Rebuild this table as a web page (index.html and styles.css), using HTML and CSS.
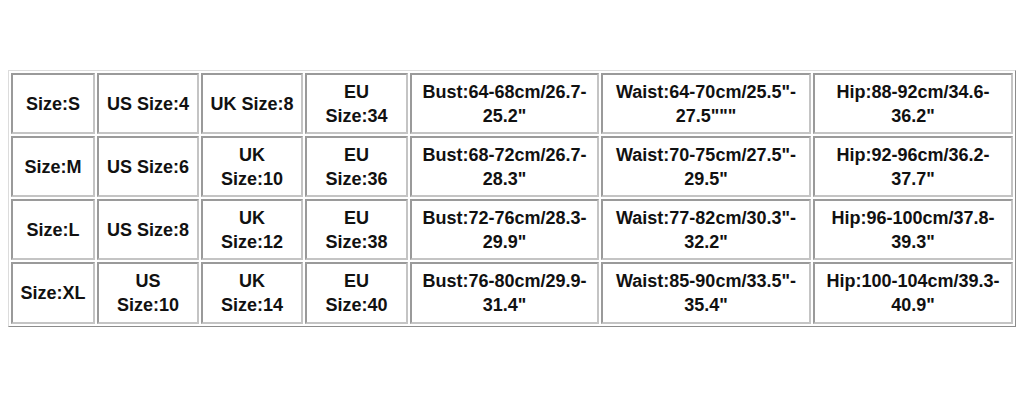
FILE: index.html
```html
<!DOCTYPE html>
<html>
<head>
<meta charset="utf-8">
<link rel="stylesheet" href="styles.css">
</head>
<body>
<table class="sizes">
  <tr>
    <td class="c1">Size:S</td>
    <td class="c2">US Size:4</td>
    <td class="c3">UK Size:8</td>
    <td class="c4">EU Size:34</td>
    <td class="c5">Bust:64-68cm/26.7-<br>25.2"</td>
    <td class="c6">Waist:64-70cm/25.5"-<br>27.5"""</td>
    <td class="c7">Hip:88-92cm/34.6-<br>36.2"</td>
  </tr>
  <tr>
    <td>Size:M</td>
    <td>US Size:6</td>
    <td>UK Size:10</td>
    <td>EU Size:36</td>
    <td>Bust:68-72cm/26.7-<br>28.3"</td>
    <td>Waist:70-75cm/27.5"-<br>29.5"</td>
    <td>Hip:92-96cm/36.2-<br>37.7"</td>
  </tr>
  <tr>
    <td>Size:L</td>
    <td>US Size:8</td>
    <td>UK Size:12</td>
    <td>EU Size:38</td>
    <td>Bust:72-76cm/28.3-<br>29.9"</td>
    <td>Waist:77-82cm/30.3"-<br>32.2"</td>
    <td>Hip:96-100cm/37.8-<br>39.3"</td>
  </tr>
  <tr>
    <td>Size:XL</td>
    <td>US Size:10</td>
    <td>UK Size:14</td>
    <td>EU Size:40</td>
    <td>Bust:76-80cm/29.9-<br>31.4"</td>
    <td>Waist:85-90cm/33.5"-<br>35.4"</td>
    <td>Hip:100-104cm/39.3-<br>40.9"</td>
  </tr>
</table>
</body>
</html>
```

FILE: styles.css
```css
html, body {
  margin: 0;
  padding: 0;
  background: #ffffff;
}

body {
  padding: 70px 8px 0 8px;
  font-family: "Liberation Sans", Arial, sans-serif;
}

.sizes {
  width: 1008px;
  table-layout: fixed;
  border-collapse: separate;
  border-spacing: 2px;
  border: 1px solid;
  border-color: #dcdcdc #8c8c8c #8c8c8c #dcdcdc;
}

.sizes td {
  box-sizing: border-box;
  height: 61px;
  padding: 0 5px;
  border: 2px solid;
  border-color: #9a9a9a #c4c4c4 #c4c4c4 #9a9a9a;
  text-align: center;
  vertical-align: middle;
  font-size: 18px;
  font-weight: bold;
  line-height: 24px;
  color: #111111;
}

.sizes tr:last-child td {
  height: 62px;
}

.c1 { width: 84px; }
.c2 { width: 102px; }
.c3 { width: 102px; }
.c4 { width: 103px; }
.c5 { width: 189px; }
.c6 { width: 210px; }
.c7 { width: 200px; }
```
